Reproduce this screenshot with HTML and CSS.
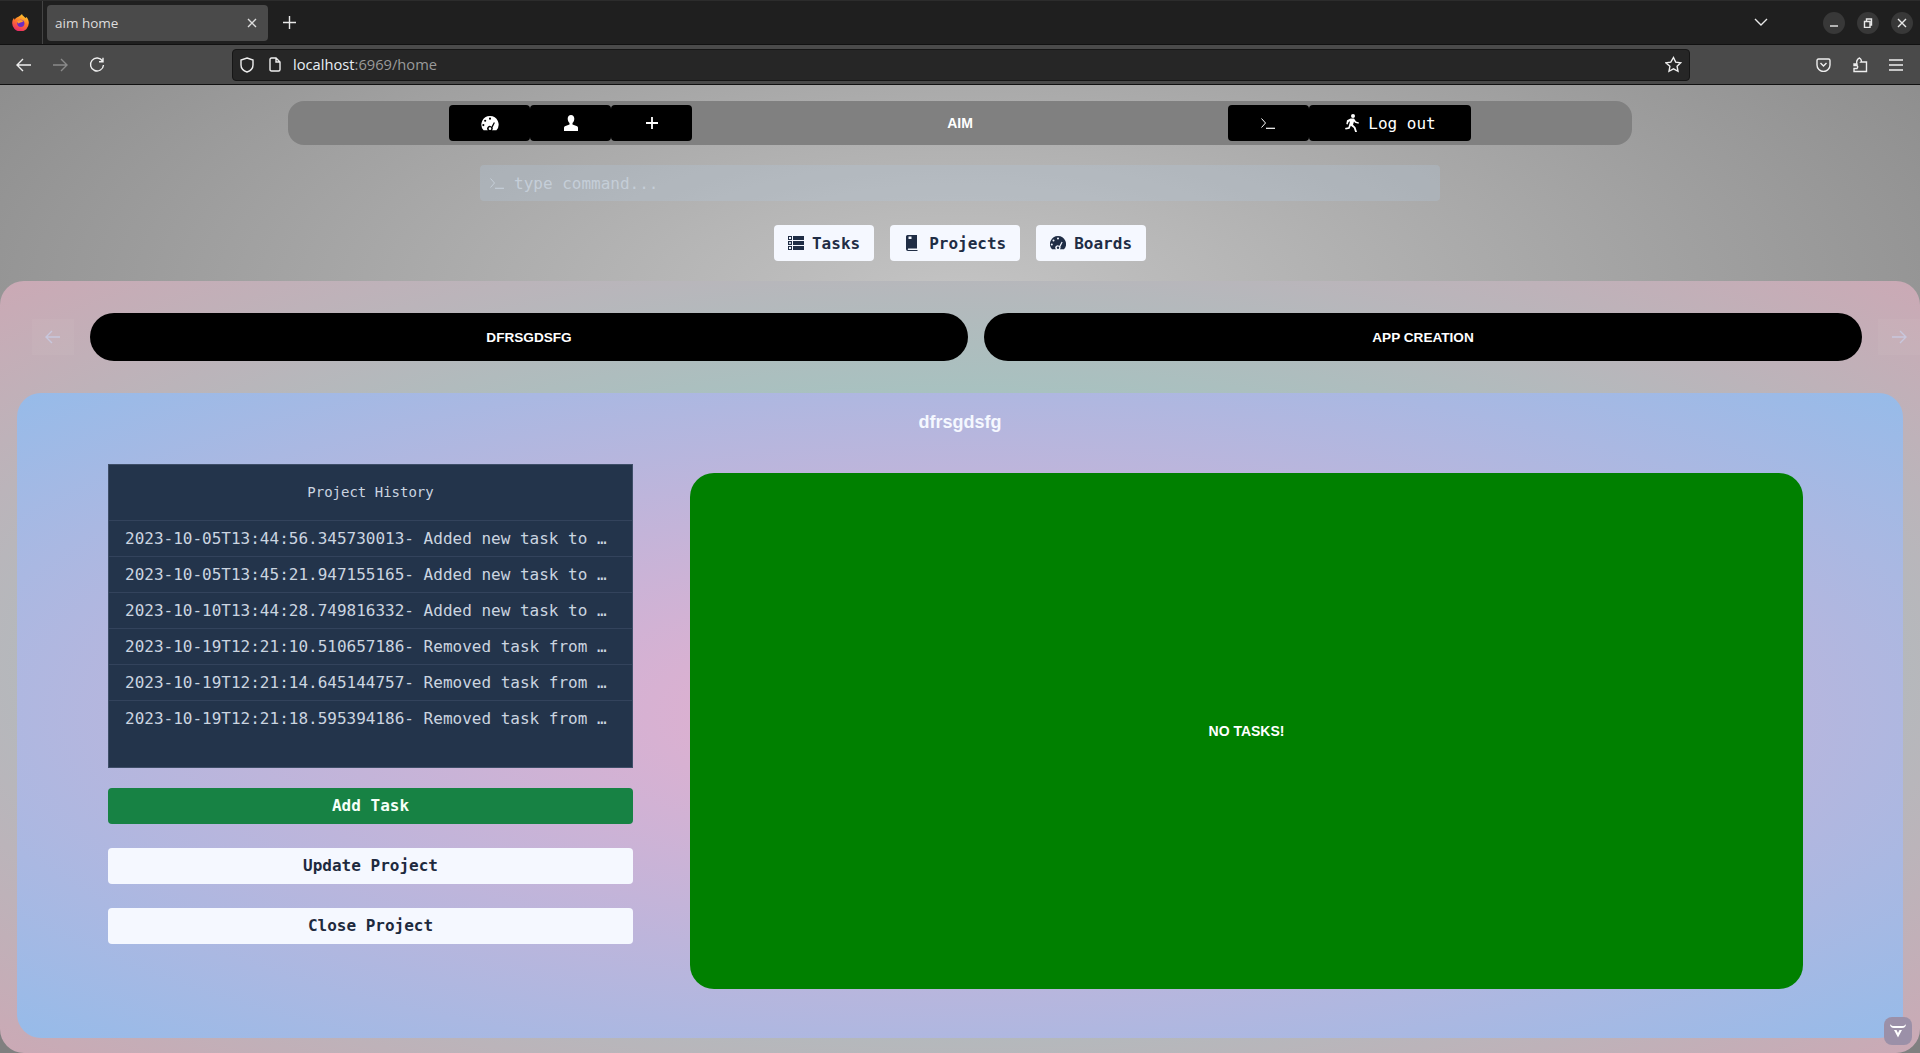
FILE: index.html
```html
<!DOCTYPE html>
<html>

<head>
    <meta charset="UTF-8">
    <title>aim home</title>
    <link rel="stylesheet" href="styles.css">
</head>

<body>

    <header class="tabbar">
        <div class="fox-slot">
            <svg width="17" height="17" viewBox="0 0 17 17">
                <defs>
                    <linearGradient id="foxGrad" x1="0.7" y1="0" x2="0.3" y2="1">
                        <stop offset="0" stop-color="#ffd02e" />
                        <stop offset=".45" stop-color="#ff7a28" />
                        <stop offset="1" stop-color="#e8246c" />
                    </linearGradient>
                </defs>
                <path d="M10 0c.3 1.800 2.300 2.500 3.500 4 .5-.3.800-.6 1-1 1.500 2 2.500 4 2.300 6.300A8.300 8.300 0 0 1 .2 9c0-1.800.6-3.700 1.800-5 .1.800.4 1.300.8 1.700C4 3 7.500 3 10 0z" fill="url(#foxGrad)" />
                <circle cx="8.800" cy="9.300" r="3.600" fill="#6b2bc4" />
                <path d="M5 7c2-1.500 5-1.300 6.500 0-.5 1-2 1-3 1.500L6 9.500z" fill="#ff9a2e" />
            </svg>
        </div>
        <div class="tab">
            <span>aim home</span>
            <svg width="10" height="10" viewBox="0 0 10 10" class="ln"><path d="M1 1l8 8M9 1l-8 8" /></svg>
        </div>
        <svg class="ln new-tab" width="13" height="13" viewBox="0 0 13 13"><path d="M6.5 0v13M0 6.5h13" /></svg>
        <div class="spacer"></div>
        <svg class="ln tab-list" width="14" height="9" viewBox="0 0 14 9"><path d="M1 1l6 6 6-6" /></svg>
        <div class="win-btns">
            <span class="win-btn"><svg class="ln" width="10" height="10" viewBox="0 0 10 10"><path d="M1 8h8" /></svg></span>
            <span class="win-btn"><svg class="ln" width="10" height="10" viewBox="0 0 10 10"><path d="M1.5 3.5h5.5v6h-5.5zM3.5 3v-2h5v6h-1" /></svg></span>
            <span class="win-btn"><svg class="ln" width="10" height="10" viewBox="0 0 10 10"><path d="M1 1l8 8M9 1l-8 8" /></svg></span>
        </div>
    </header>

    <div class="toolbar">
        <svg class="ln nav-ico" width="16" height="14" viewBox="0 0 16 14"><path d="M15 7H1.5M7 1L1 7l6 6" /></svg>
        <svg class="ln nav-ico off" width="16" height="14" viewBox="0 0 16 14"><path d="M1 7h13.5M9 1l6 6-6 6" /></svg>
        <svg class="ln nav-ico" width="16" height="16" viewBox="0 0 16 16"><path d="M13.5 4A6.5 6.5 0 1 0 14.5 8M14 .8v4h-4" /></svg>
        <div class="urlbar">
            <svg class="ln" width="14" height="16" viewBox="0 0 14 16"><path d="M7 1l6 2v5c0 3.500-3 6-6 7-3-1-6-3.500-6-7V3z" /></svg>
            <svg class="ln page-ico" width="12" height="15" viewBox="0 0 12 15"><path d="M1 2.500q0-1.500 1.500-1.500H7l4 4v7.500q0 1.500-1.500 1.500h-7q-1.500 0-1.500-1.500zM7 1v4h4" /></svg>
            <span class="url"><b>localhost</b>:6969/home</span>
            <svg class="ln star" width="17" height="17" viewBox="0 0 17 17"><path d="M8.500 1.500l2.200 4.600 5 .7-3.600 3.500.9 5-4.500-2.400-4.500 2.400.9-5L.8 6.800l5-.7z" /></svg>
        </div>
        <svg class="ln pocket" width="15" height="14" viewBox="0 0 15 14"><path d="M1 2.500Q1 1 2.500 1h10Q14 1 14 2.500V7A6.500 6.500 0 0 1 1 7zM4.500 5l3 3 3-3" /></svg>
        <svg class="ln ext" width="15" height="16" viewBox="0 0 15 16"><path d="M1 7h3c-1-2 0-5 2.500-6C8 2 9 4 8 5h5.500v9.500H1v-3h3c1-1 1-3-.5-3H1z" /></svg>
        <svg class="ln menu" width="14" height="12" viewBox="0 0 14 12"><path d="M0 1h14M0 6h14M0 11h14" /></svg>
    </div>

    <main class="page">

        <nav class="topnav">
            <div class="btn-group">
                <button class="nav-btn">
                    <svg class="solid" width="18" height="15" viewBox="0 0 16 14"><path fill-rule="evenodd" d="M8 0a8 8 0 0 1 6 13.300H9.800a2.300 2.300 0 0 0 .6-2.600l2.200-4.400-1-.5-2.300 4.200A2.300 2.300 0 0 0 6 13.300H2A8 8 0 0 1 8 0zM8 1.500a1 1 0 1 0 0 2 1 1 0 0 0 0-2zM3.500 3.400a1 1 0 1 0 0 2 1 1 0 0 0 0-2zM1.800 7.500a1 1 0 1 0 0 2 1 1 0 0 0 0-2z" /><circle cx="8" cy="11.800" r="1.200" /></svg>
                </button>
                <button class="nav-btn">
                    <svg class="solid" width="14" height="16" viewBox="0 0 14 16"><path d="M7 0c2 0 3.300 1.500 3.300 3.700 0 1.800-.8 3.400-1.800 4.200v1.500l4 1.700c1 .4 1.500 1 1.500 2V16H0v-2.900c0-1 .5-1.600 1.500-2l4-1.700V7.900C4.500 7.100 3.700 5.500 3.700 3.700 3.700 1.500 5 0 7 0z" /></svg>
                </button>
                <button class="nav-btn">
                    <svg class="ln thick" width="12" height="12" viewBox="0 0 12 12"><path d="M6 0v12M0 6h12" /></svg>
                </button>
            </div>
            <span class="brand">AIM</span>
            <div class="btn-group">
                <button class="nav-btn">
                    <svg class="prompt" width="14" height="11" viewBox="0 0 14 11"><path class="chev" d="M.5 .5l4 4.500-4 4.500" /><path d="M5 10.300h9" /></svg>
                </button>
                <button class="nav-btn">
                    <svg class="solid" width="16" height="18" viewBox="0 0 16 18"><circle cx="9" cy="2" r="2" /><path d="M6.500 4.500h3.500l2 3 3 1-.5 1.300-3.500-1-1-1.300-1 3.200 2.500 2.500 1.500 4.800-1.700.5-1.500-4.500-3-2.300-1.200 3-4 .8-.6-1.500 3.400-.7 1.700-6-1.500.8-1 2.500-1.300-.5L3 6.300z" /></svg>
                    Log out
                </button>
            </div>
        </nav>

        <div class="cmd-row">
            <svg class="prompt" width="14" height="11" viewBox="0 0 14 11"><path class="chev" d="M.5 .5l4 4.500-4 4.500" /><path d="M5 10.300h9" /></svg>
            <span>type command...</span>
        </div>

        <div class="tabs">
            <button class="tab-btn">
                <svg class="solid" width="16" height="14" viewBox="0 0 16 14"><path fill-rule="evenodd" d="M0 0h4v4H0zM1 1v2h2V1zM5 0h11v4H5zM0 5h4v4H0zM1 6v2h2V6zM5 5h11v4H5zM0 10h4v4H0zM1 11v2h2v-2zM5 10h11v4H5z" /><path d="M1.500 6.500h1v1h-1z" /></svg>
                Tasks
            </button>
            <button class="tab-btn">
                <svg class="solid" width="17" height="16" viewBox="-2 0 17 16"><path fill-rule="evenodd" d="M1.500 0H11v13.500H2.200a.9.900 0 0 0 0 1.500H11.500v1H2a2 2 0 0 1-2-2V1.500A1.500 1.500 0 0 1 1.500 0zM2.500 1.500v2.500h3V1.500z" /></svg>
                Projects
            </button>
            <button class="tab-btn">
                <svg class="solid" width="16" height="14" viewBox="0 0 16 14"><path fill-rule="evenodd" d="M8 0a8 8 0 0 1 6 13.300H9.800a2.300 2.300 0 0 0 .6-2.600l2.200-4.400-1-.5-2.300 4.200A2.300 2.300 0 0 0 6 13.300H2A8 8 0 0 1 8 0zM8 1.500a1 1 0 1 0 0 2 1 1 0 0 0 0-2zM3.500 3.400a1 1 0 1 0 0 2 1 1 0 0 0 0-2zM1.800 7.500a1 1 0 1 0 0 2 1 1 0 0 0 0-2z" /><circle cx="8" cy="11.800" r="1.200" /></svg>
                Boards
            </button>
        </div>

        <section class="board">
            <div class="pill-row">
                <span class="arrow">
                    <svg class="ln" width="16" height="14" viewBox="0 0 16 14"><path d="M15 7H1.500M7 1L1 7l6 6" /></svg>
                </span>
                <div class="pill">DFRSGDSFG</div>
                <div class="pill">APP CREATION</div>
                <span class="arrow">
                    <svg class="ln" width="16" height="14" viewBox="0 0 16 14"><path d="M1 7h13.500M9 1l6 6-6 6" /></svg>
                </span>
            </div>

            <div class="project">
                <h2 class="project-name">dfrsgdsfg</h2>
                <div class="project-body">
                    <div class="side">
                        <div class="history">
                            <div class="history-title">Project History</div>
                            <div class="history-row">2023-10-05T13:44:56.345730013- Added new task to project dfrsgdsfg</div>
                            <div class="history-row">2023-10-05T13:45:21.947155165- Added new task to project dfrsgdsfg</div>
                            <div class="history-row">2023-10-10T13:44:28.749816332- Added new task to project dfrsgdsfg</div>
                            <div class="history-row">2023-10-19T12:21:10.510657186- Removed task from project dfrsgdsfg</div>
                            <div class="history-row">2023-10-19T12:21:14.645144757- Removed task from project dfrsgdsfg</div>
                            <div class="history-row">2023-10-19T12:21:18.595394186- Removed task from project dfrsgdsfg</div>
                        </div>
                        <button class="action green">Add Task</button>
                        <button class="action">Update Project</button>
                        <button class="action">Close Project</button>
                    </div>
                    <div class="tasks-box">NO TASKS!</div>
                </div>
            </div>
        </section>

        <div class="vite-badge">
            <svg class="solid" width="16" height="14" viewBox="0 0 16 14"><path d="M0 0c1 1.500 2 2 4 2h8c2 0 3-.5 4-2 0 2.500-1.500 4-4 4H4C1.500 4 0 2.500 0 0zM4 6h2.500L8 9l1.500-3H12l-4 7.500z" /></svg>
        </div>
    </main>

</body>

</html>
```
FILE: styles.css
```css
* {
    box-sizing: border-box;
}

html,
body {
    height: 100%;
}

body {
    margin: 0;
    display: flex;
    flex-direction: column;
    overflow: hidden;
    font-family: "DejaVu Sans Mono", monospace;
    background-color: #222;
}

.ln {
    fill: none;
    stroke: currentColor;
    stroke-width: 1.4;
    flex-shrink: 0;
}

.ln.thick {
    stroke-width: 1.8;
}

.solid {
    fill: currentColor;
    flex-shrink: 0;
}

.prompt {
    fill: none;
    stroke: currentColor;
    stroke-width: 1.2;
    flex-shrink: 0;
}

.prompt .chev {
    stroke-width: 1;
}

/* browser chrome */
.tabbar {
    height: 44px;
    display: flex;
    align-items: center;
    background-color: #1f1f1f;
    border-top: 1px solid #2c2c2c;
    color: #e8e8e8;
}

.fox-slot {
    width: 43px;
    height: 44px;
    display: flex;
    align-items: center;
    padding-left: 12px;
    border-right: 1px solid #444;
}

.tab {
    width: 221px;
    height: 36px;
    margin-left: 4px;
    padding: 0 11px 0 8px;
    display: flex;
    align-items: center;
    justify-content: space-between;
    border-radius: 4px;
    background-color: #4a4a4a;
    font: 13.5px "Open Sans", sans-serif;
    color: #ddd;
}

.new-tab {
    margin-left: 15px;
}

.spacer {
    flex: 1;
}

.tab-list {
    margin-right: 55px;
}

.win-btns {
    display: flex;
    gap: 12px;
    margin-right: 7px;
}

.win-btn {
    width: 22px;
    height: 22px;
    border-radius: 50%;
    background-color: #383838;
    display: flex;
    align-items: center;
    justify-content: center;
}

.toolbar {
    height: 41px;
    display: flex;
    align-items: center;
    background-color: #4a4a4a;
    border-top: 1px solid #111;
    border-bottom: 1px solid #111;
    color: #eee;
}

.nav-ico {
    margin-left: 16px;
    margin-right: 5px;
}

.nav-ico.off {
    color: #8a8a8a;
    margin-left: 15px;
}

.urlbar {
    width: 1458px;
    height: 32px;
    margin-left: 122px;
    padding: 0 8px 0 7px;
    display: flex;
    align-items: center;
    background-color: #262626;
    border: 1px solid #161616;
    border-radius: 4px;
}

.page-ico {
    margin-left: 15px;
}

.url {
    margin-left: 12px;
    margin-top: -2px;
    flex: 1;
    font: 14.7px "Open Sans", sans-serif;
    color: #9a9a9a;
}

.url b {
    font-weight: 400;
    color: #e8eef5;
}

.star {
    margin-right: -1px;
}

.pocket {
    margin-left: 126px;
}

.ext {
    margin-left: 22px;
}

.menu {
    margin-left: 21px;
}

/* page */
.page {
    flex: 1;
    display: flex;
    flex-direction: column;
    align-items: center;
    position: relative;
    background: radial-gradient(ellipse 1400px 560px at 50% 215px, #c4c4c4, gray);
}

.topnav {
    width: 1344px;
    height: 44px;
    margin-top: 16px;
    padding: 0 161px;
    display: flex;
    align-items: center;
    justify-content: space-between;
    border-radius: 16px;
    background-color: #808080;
}

.btn-group {
    display: flex;
}

.nav-btn {
    width: 81px;
    height: 36px;
    display: flex;
    align-items: center;
    justify-content: center;
    gap: 8px;
    border: 0;
    border-radius: 4px;
    background-color: #000;
    color: #fff;
    font: 16px "DejaVu Sans Mono", monospace;
}

.btn-group:last-child .nav-btn:last-child {
    width: 162px;
}

.brand {
    font: bold 14px "Liberation Sans", sans-serif;
    color: #fff;
}

.cmd-row {
    width: 960px;
    height: 36px;
    margin-top: 20px;
    padding: 0 10px;
    display: flex;
    align-items: center;
    gap: 10px;
    border-radius: 4px;
    background-color: rgba(180, 200, 217, .3);
    color: #c5ced8;
    font-size: 16px;
}

.tabs {
    display: flex;
    gap: 16px;
    margin-top: 24px;
}

.tab-btn {
    height: 36px;
    padding: 0 14px;
    display: flex;
    align-items: center;
    gap: 8px;
    border: 0;
    border-radius: 4px;
    background-color: #f5f8ff;
    color: #1f2d45;
    font: bold 16px "DejaVu Sans Mono", monospace;
}

.board {
    width: 100%;
    flex: 1;
    margin-top: 20px;
    padding: 32px 17px 15px;
    display: flex;
    flex-direction: column;
    border-radius: 24px;
    background: radial-gradient(#84dacb, #cba9b5);
}

.pill-row {
    display: flex;
    align-items: center;
    gap: 16px;
    height: 48px;
    margin: 0 -17px 0 15px;
}

.arrow {
    width: 42px;
    height: 36px;
    display: flex;
    flex-shrink: 0;
    align-items: center;
    justify-content: center;
    background-color: rgba(255, 255, 255, .04);
    color: rgba(200, 205, 230, .8);
}

.pill {
    flex: 1;
    height: 48px;
    display: flex;
    align-items: center;
    justify-content: center;
    border-radius: 24px;
    background-color: #000;
    color: #fff;
    font: bold 13.6px "Liberation Sans", sans-serif;
}

.project {
    flex: 1;
    margin-top: 32px;
    padding: 19px 0 0;
    border-radius: 24px;
    background: radial-gradient(#ebaecb, #96bbe9);
}

.project-name {
    margin: 0;
    text-align: center;
    font: bold 18px/21px "Liberation Sans", sans-serif;
    color: #f5f8ff;
}

.project-body {
    display: flex;
    align-items: flex-start;
    margin-top: 31px;
    padding-left: 91px;
}

.side {
    width: 525px;
}

.history {
    height: 304px;
    border: 1px solid #3e4e68;
    background-color: #23344b;
    color: #cbd5e0;
}

.history-title {
    height: 55px;
    padding-top: 17px;
    text-align: center;
    font-size: 14px;
    line-height: 20px;
}

.history-row {
    height: 36px;
    padding: 0 16px;
    border-top: 1px solid #33435c;
    font-size: 16px;
    line-height: 35px;
    white-space: nowrap;
    overflow: hidden;
    text-overflow: ellipsis;
}

.action {
    display: block;
    width: 100%;
    height: 36px;
    margin-top: 24px;
    padding: 0 0 2px;
    border: 0;
    border-radius: 4px;
    background-color: #f5f8ff;
    color: #1e2a3e;
    font: bold 16px "DejaVu Sans Mono", monospace;
}

.action.green {
    margin-top: 20px;
    background-color: #178244;
    color: #f5fff8;
}

.tasks-box {
    width: 1113px;
    height: 516px;
    margin: 9px 0 0 57px;
    display: flex;
    align-items: center;
    justify-content: center;
    border-radius: 24px;
    background-color: #008000;
    color: #fff;
    font: bold 14px "Liberation Sans", sans-serif;
}

.vite-badge {
    position: absolute;
    right: 8px;
    bottom: 8px;
    width: 28px;
    height: 28px;
    display: flex;
    align-items: center;
    justify-content: center;
    border-radius: 8px;
    background-color: #9b90a8;
    color: #fff;
}
```
